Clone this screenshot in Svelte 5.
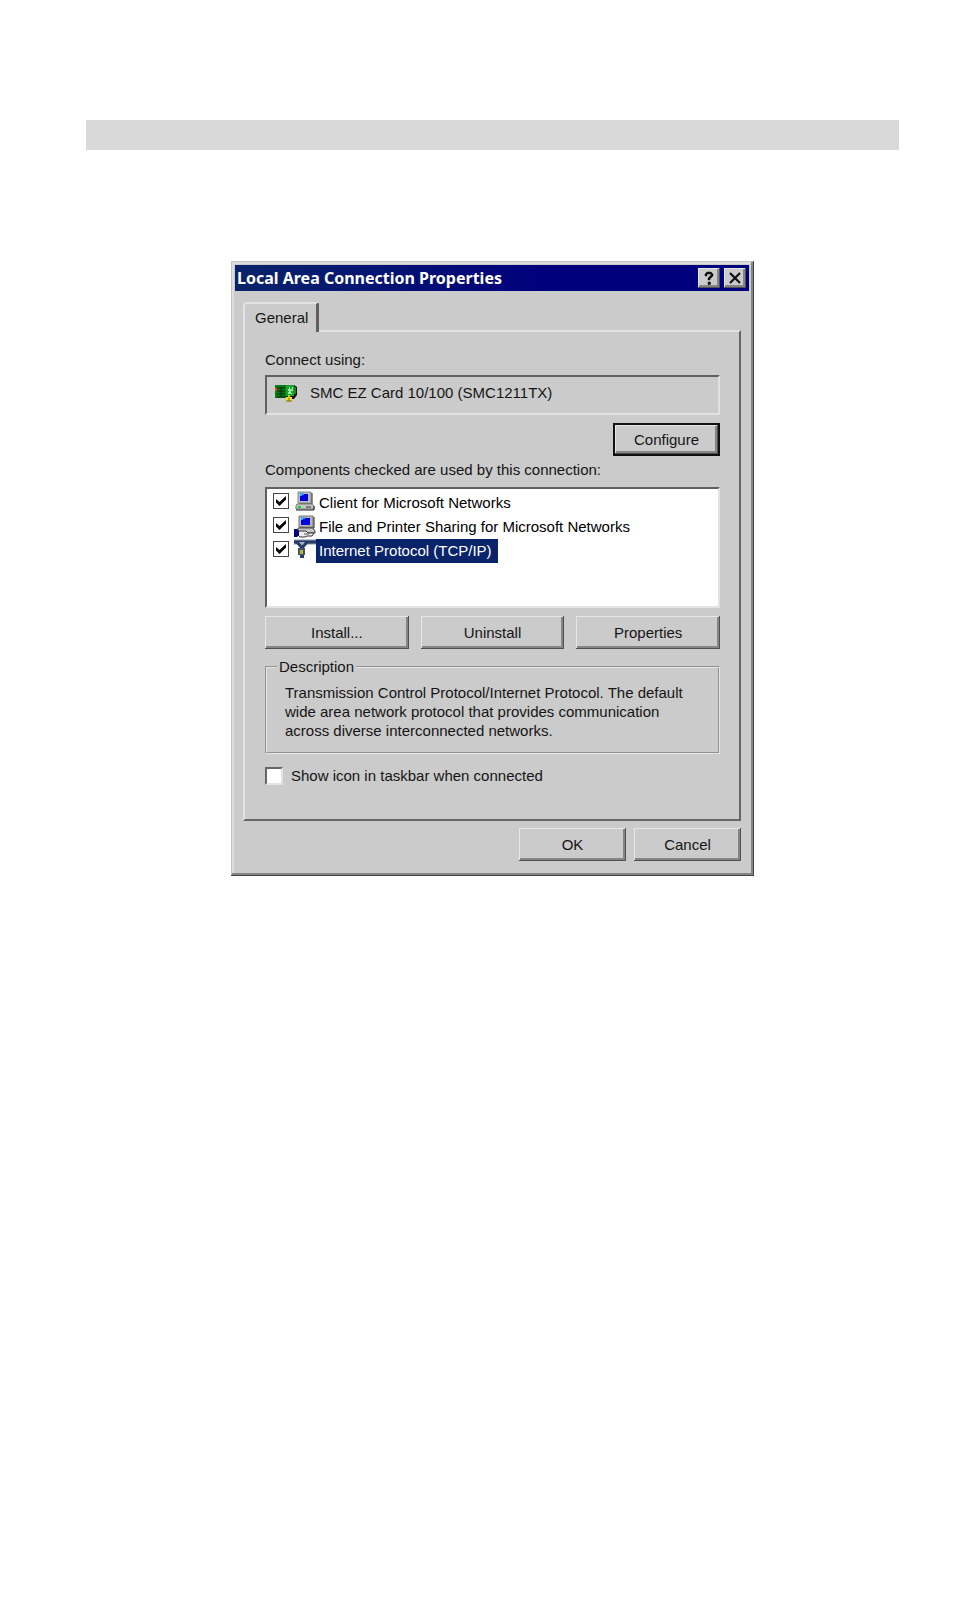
<script>
    let components = [
        { id: 'client', name: 'Client for Microsoft Networks', checked: true },
        { id: 'sharing', name: 'File and Printer Sharing for Microsoft Networks', checked: true },
        { id: 'tcpip', name: 'Internet Protocol (TCP/IP)', checked: true }
    ]
    let selected = 'tcpip'
    let showIcon = false
</script>

<main>
    <div class="band"></div>

    <section class="dialog" aria-labelledby="title">
        <header>
            <h1 id="title">Local Area Connection Properties</h1>
            <button class="caption" aria-label="Help">
                <svg width="12" height="14" viewBox="0 0 12 14">
                    <path d="M2 5V3L4 1H8L10 3V5L7 8V9H5V7L8 4V3H4V5ZM5 11H7.500V13.500H5Z" fill="#111" stroke="#111" stroke-width=".5" />
                </svg>
            </button>
            <button class="caption close" aria-label="Close">
                <svg width="12" height="12" viewBox="0 0 12 12">
                    <path d="M1 1L11 11M11 1L1 11" stroke="#111" stroke-width="2.200" />
                </svg>
            </button>
        </header>

        <div class="body">
            <div class="tab" role="tab" aria-selected="true" tabindex="0">General</div>

            <div class="panel">
                <p class="label">Connect using:</p>
                <div class="adapter">
                    <svg width="23" height="18" viewBox="0 0 23 18">
                        <path d="M0 1H11V14H0Z" fill="#087b18" />
                        <path d="M2 4H10M2 7H10M2 10H10M2 13H10M6 3V13" stroke="#092d0c" stroke-width="1" />
                        <path d="M0 4H2V7H0Z" fill="#f04020" />
                        <path d="M11 1H19L22 3V11L19 15H11Z" fill="#111" />
                        <path d="M11 1H19V12H11Z" fill="#18a42c" />
                        <path d="M13 5H14V3H15V5H17V3H18V7H16V9H17V10H13V8H14V7H13Z" fill="#9ae69e" />
                        <path d="M19 3H21V10H19Z" fill="#188020" />
                        <path d="M11 13H17V17H11Z" fill="#f0e020" />
                        <path d="M13 11H15V14H13Z" fill="#e7c900" />
                        <path d="M14 14V17M11 17H17" stroke="#806c00" />
                    </svg>
                    <span>SMC EZ Card 10/100 (SMC1211TX)</span>
                </div>

                <button class="push default">Configure</button>

                <p class="label used">Components checked are used by this connection:</p>
                <ul>
                    {#each components as item}
                        <li>
                            <input id={item.id} class="flat" type="checkbox" bind:checked={item.checked}>
                            <svg width="22" height="24" viewBox="0 0 22 24">
                                {#if item.id === 'tcpip'}
                                    <path d="M0 3H22" stroke="#8792aa" stroke-width="5" />
                                    <path d="M0 3H22" stroke="#263b68" stroke-width="3" />
                                    <path d="M3 3L8 9L13 3" fill="#aab2c4" stroke="#263b68" stroke-width="3" />
                                    <path d="M6 8H10V19H6Z" fill="#263b68" />
                                    <path d="M4 9H11V16H4Z" fill="#465066" />
                                    <path d="M6 11H9V15H6Z" fill="#b3b832" />
                                {:else if item.id === 'sharing'}
                                    <path d="M5 1H19V12H5Z" fill="#b8b8b8" stroke="#777" />
                                    <path d="M20 2V13H6" fill="none" stroke="#222" />
                                    <path d="M7 3H16V10H7Z" fill="#0000dc" />
                                    <path d="M8 5V3H11" fill="none" stroke="#38a8ff" stroke-width="2" />
                                    <path d="M4 13H19L21 16V18H4Z" fill="#c8c8c8" stroke="#444" />
                                    <path d="M5 16H12L14 18H20L18 21H13L11 22H6L3 19Z" fill="#eee" stroke="#333" />
                                    <path d="M10 19H15" stroke="#555" />
                                    <path d="M0 14H3L5 16V20L3 22H0Z" fill="#000078" />
                                {:else}
                                    <path d="M4 1H17V12H4Z" fill="#bdbdbd" stroke="#888" />
                                    <path d="M18 2V13H5" fill="none" stroke="#222" />
                                    <path d="M6 3H14V10H6Z" fill="#0000dc" />
                                    <path d="M7 5V3H10" fill="none" stroke="#38a8ff" stroke-width="2" />
                                    <path d="M3 13H18L20 15V18H2V15Z" fill="#c8c8c8" stroke="#777" />
                                    <path d="M2 19H20V15" fill="none" stroke="#222" />
                                    <path d="M4 16H7" stroke="#00df32" stroke-width="2" />
                                    <path d="M12 16H17" stroke="#333" />
                                {/if}
                            </svg>
                            <label for={item.id} class:selected={selected === item.id}>{item.name}</label>
                        </li>
                    {/each}
                </ul>

                <div class="actions">
                    <button class="push">Install...</button>
                    <button class="push">Uninstall</button>
                    <button class="push">Properties</button>
                </div>

                <fieldset>
                    <legend>Description</legend>
                    <p>Transmission Control Protocol/Internet Protocol. The default wide area network protocol that provides communication across diverse interconnected networks.</p>
                </fieldset>

                <div class="taskbar">
                    <input id="showicon" type="checkbox" bind:checked={showIcon}>
                    <label for="showicon">Show icon in taskbar when connected</label>
                </div>
            </div>

            <footer>
                <button class="push">OK</button>
                <button class="push">Cancel</button>
            </footer>
        </div>
    </section>
</main>

<style>
    :global(body) {
        margin: 0;
        background: #fff;
    }

    * {
        box-sizing: border-box;
    }

    main {
        padding: 120px 55px 40px 86px;
        font-family: "Liberation Sans", Arial, sans-serif;
        font-size: 15px;
        line-height: 20px;
        color: #151515;
    }

    h1, p, ul {
        margin: 0;
        padding: 0;
    }

    .band {
        height: 30px;
        background: #d9d9d9;
    }

    .dialog {
        max-width: 523px;
        margin: 111px auto 0;
        padding: 4px 5px 5px 4px;
        background: #cbcbcb;
        box-shadow: inset -1px -1px #444, inset 1px 1px #c4c4c4, inset -3px -3px #858585, inset 3px 3px #dedede;
    }

    header {
        display: flex;
        align-items: center;
        height: 26px;
        padding: 0 3px 0 2px;
        background: linear-gradient(to right, #0a246a, #00007c 60%);
    }

    h1 {
        flex: 1;
        font-family: "Noto Sans", sans-serif;
        font-size: 16px;
        line-height: 24px;
        font-weight: bold;
        color: #fff;
        white-space: nowrap;
    }

    button {
        padding: 0;
        border: 0;
        border-radius: 0;
        font: inherit;
        color: inherit;
        background: #cbcbcb;
        box-shadow: inset -1px -1px #505050, inset 1px 1px #e6e6e6, inset -3px -3px #858585;
    }

    .caption {
        display: flex;
        align-items: center;
        justify-content: center;
        width: 22px;
        height: 20px;
    }

    .close {
        margin-left: 4px;
    }

    .body {
        padding: 11px 8px 10px 8px;
    }

    .tab {
        position: relative;
        width: 76px;
        height: 30px;
        margin-bottom: -2px;
        padding: 4px 10px;
        background: #cbcbcb;
        border: 2px solid #e2e2e2;
        border-right: 3px solid #606060;
        border-bottom: 0;
        border-radius: 4px 3px 0 0;
    }

    .panel {
        padding: 18px 19px 34px 20px;
        border: 2px solid #e2e2e2;
        border-right-color: #666;
        border-bottom-color: #666;
    }

    .adapter {
        display: flex;
        align-items: flex-start;
        height: 40px;
        margin: 5px 0 8px;
        padding: 7px 8px;
        border: 2px solid #606060;
        border-right-color: #e2e2e2;
        border-bottom-color: #e2e2e2;
    }

    .adapter span {
        margin-left: 12px;
        line-height: 18px;
    }

    .push {
        height: 33px;
        min-width: 107px;
    }

    .default {
        display: block;
        margin-left: auto;
        border: 2px solid #111;
    }

    .used {
        margin: 4px 0 7px;
    }

    ul {
        height: 121px;
        padding: 2px 6px;
        list-style: none;
        color: #000;
        background: #fff;
        border: 2px solid #606060;
        border-right-color: #e2e2e2;
        border-bottom-color: #e2e2e2;
    }

    li {
        display: flex;
        height: 24px;
        line-height: 24px;
    }

    li svg {
        margin-left: 5px;
    }

    li label {
        padding: 0 6px 0 3px;
    }

    .selected {
        color: #fff;
        background: #0a246a;
    }

    input {
        appearance: none;
        width: 18px;
        height: 18px;
        margin: 0;
        background: #fff;
        border: 2px solid #666;
        border-right-color: #e2e2e2;
        border-bottom-color: #e2e2e2;
    }

    .flat {
        width: 16px;
        height: 16px;
        margin-top: 2px;
        border: 1px solid #444;
    }

    input:checked::before {
        content: '';
        display: block;
        width: 10px;
        height: 10px;
        margin: 2px;
        background: #000;
        clip-path: polygon(0 30%, 35% 60%, 100% 0, 100% 35%, 35% 100%, 0 65%);
    }

    .actions {
        display: grid;
        grid-template-columns: repeat(3, 1fr);
        gap: 12px;
        margin: 8px 0;
    }

    fieldset {
        min-width: 0;
        margin: 0;
        padding: 6px 18px 12px;
        border: 2px groove #e6e6e6;
    }

    legend {
        margin-left: -8px;
        padding: 0 2px;
    }

    fieldset p {
        line-height: 19px;
    }

    .taskbar {
        display: flex;
        align-items: center;
        height: 18px;
        margin-top: 13px;
    }

    .taskbar label {
        margin-left: 8px;
    }

    footer {
        display: flex;
        justify-content: flex-end;
        gap: 8px;
        margin-top: 7px;
    }
</style>
